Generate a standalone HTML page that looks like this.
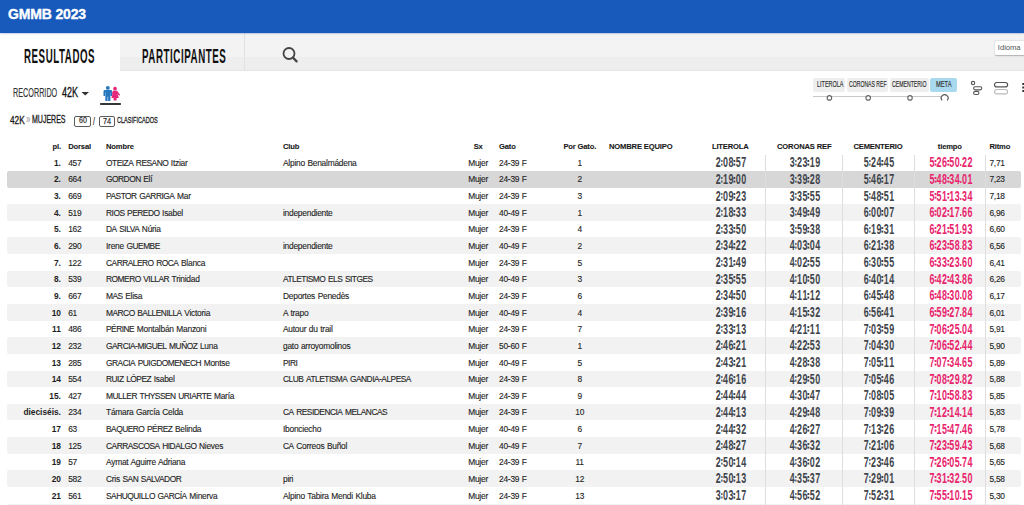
<!DOCTYPE html><html><head><meta charset="utf-8"><style>
*{margin:0;padding:0;box-sizing:border-box}
html,body{width:1024px;height:505px;overflow:hidden;background:#fff}
body{position:relative;font-family:"Liberation Sans",sans-serif;color:#222}
.a{position:absolute;white-space:nowrap}
.hdr{left:0;top:0;width:1024px;height:33px;background:#175abc;box-shadow:0 0.6px 1.6px rgba(20,70,170,.45);z-index:2}
.brand{z-index:3}
.brand{left:8px;top:5px;font-size:14px;line-height:18px;font-weight:bold;color:#fff;letter-spacing:-0.15px;-webkit-text-stroke:0.35px #fff}
.tabs{left:0;top:33px;width:1024px;height:38px;background:linear-gradient(#f3f3f3 0,#f3f3f3 24px,#eeeeee 24px,#eeeeee 37px,#e4e4e4 37px)}
.tab1{left:0;top:33px;width:120px;height:38px;background:#fff}
.sep1{left:244px;top:33px;width:1px;height:37px;background:#e2e2e2}
.cond{font-weight:bold;transform-origin:0 0;display:inline-block}
.idioma{left:995px;top:41.2px;width:31px;height:14px;background:#fff;border-radius:1.5px;box-shadow:0 0.5px 1.5px rgba(0,0,0,.3);font-size:7.6px;line-height:14.6px;color:#555;padding-left:2.8px;letter-spacing:0px}
.row{left:7px;width:1014px;height:16.64px}
.r2{background:#d7d7d7;border-radius:2px}
.rl{background:#f2f2f2;border-radius:2px}
.t{font-size:8.4px;line-height:16.64px;padding-top:0.6px;color:#1e1e1e;letter-spacing:-0.3px;word-spacing:0.5px;-webkit-text-stroke:0.12px #1e1e1e}
.t.b{letter-spacing:-0.02px;-webkit-text-stroke:0}
.t{letter-spacing:-0.24px}
.t u{text-decoration:none;letter-spacing:-0.5px}
.b{font-weight:bold}
.th{font-size:7.6px;line-height:12px;font-weight:bold;color:#1a1a1a;letter-spacing:-0.15px;-webkit-text-stroke:0.1px #1a1a1a}
.vs{top:154.5px;width:1px;height:351px;background:#dedede}
.tm{font-size:14.7px;line-height:16.64px;padding-top:0px;font-weight:bold;color:#40444b;transform:scaleX(0.608);transform-origin:50% 0;text-align:center;width:200px}
.tm i{font-style:normal;display:inline-block;width:9.13px;text-align:center}
.tm i.c,.tm i.p{position:relative;height:1px;color:inherit}
.tm i.c{width:2.63px}
.tm i.p{width:2.8px}
.tm i.c::before{content:"";position:absolute;left:-0.1px;top:-6.3px;width:2.7px;height:2.0px;background:currentColor;box-shadow:0 3.6px 0 currentColor}
.tm i.p::before{content:"";position:absolute;left:0.2px;top:-1.9px;width:2.4px;height:1.9px;background:currentColor}
.pk{color:#e8246c}
</style></head><body>
<div class="a hdr"></div><div class="a brand">GMMB 2023</div>
<div class="a tabs"></div><div class="a tab1"></div><div class="a sep1"></div>
<div class="a" style="left:23.62px;top:39.51px;font-size:20.99px;line-height:31.48px;font-weight:bold;color:#111;transform:scaleX(0.4635);transform-origin:0 0;;letter-spacing:1.2px">RESULTADOS</div>
<div class="a" style="left:141.92px;top:39.51px;font-size:20.99px;line-height:31.48px;font-weight:bold;color:#111;transform:scaleX(0.4649);transform-origin:0 0;;letter-spacing:1.2px">PARTICIPANTES</div>
<svg class="a" style="left:281px;top:44.6px" width="20" height="20" viewBox="0 0 20 20"><circle cx="8" cy="8.5" r="5.5" fill="none" stroke="#444" stroke-width="1.8"/><line x1="12.1" y1="12.7" x2="15.6" y2="16.4" stroke="#444" stroke-width="2.3" stroke-linecap="round"/></svg>
<div class="a idioma">Idioma</div>
<div class="a" style="left:13.42px;top:83.39px;font-size:13.52px;line-height:20.28px;font-weight:normal;color:#333;transform:scaleX(0.5355);transform-origin:0 0;-webkit-text-stroke:0.15px #333">RECORRIDO</div>
<div class="a" style="left:61.72px;top:83.31px;font-size:13.71px;line-height:20.57px;font-weight:normal;color:#111;transform:scaleX(0.6579);transform-origin:0 0;-webkit-text-stroke:0.3px #111">42K</div>
<svg class="a" style="left:81px;top:91px" width="9" height="6" viewBox="0 0 9 6"><path d="M0.5 1 H8 L4.25 4.6 Z" fill="#333"/></svg>
<svg class="a" style="left:96px;top:82px" width="30" height="24" viewBox="0 0 30 24">
<circle cx="11.8" cy="5.9" r="1.95" fill="#2878c0"/>
<path d="M8.7 8.1 H14.9 Q16.1 8.1 16.1 9.3 V13.9 H14.6 V10.6 H14.4 V18.9 H12.1 V14.8 H11.6 V18.9 H9.3 V10.6 H9.0 V13.9 H7.5 V9.3 Q7.5 8.1 8.7 8.1 Z" fill="#2878c0"/>
<circle cx="19" cy="6.7" r="1.85" fill="#e4287a"/>
<path d="M17.3 8.8 H20.7 Q21.3 8.8 21.7 9.5 L24.2 13.1 L23.1 13.8 L21.4 11.6 L22.9 16.1 H20.6 V18.5 H17.6 V16.1 H15.4 L16.6 11.6 L15.6 13 L16.6 9.5 Q16.9 8.8 17.3 8.8 Z" fill="#e4287a"/>
</svg>
<div class="a" style="left:100.2px;top:103.1px;width:20.8px;height:1.5px;background:#363636;border-radius:0.7px"></div>
<div class="a" style="left:10.14px;top:110.71px;font-size:11.71px;line-height:17.57px;font-weight:normal;color:#1a1a1a;transform:scaleX(0.7016);transform-origin:0 0;-webkit-text-stroke:0.35px #1a1a1a">42K</div>
<div class="a" style="left:26.2px;top:110.8px;font-size:13px;line-height:16px;color:#999;transform:scaleX(0.62);transform-origin:0 0">»</div>
<div class="a" style="left:32.24px;top:110.78px;font-size:11.55px;line-height:17.32px;font-weight:normal;color:#1a1a1a;transform:scaleX(0.6070);transform-origin:0 0;-webkit-text-stroke:0.35px #1a1a1a">MUJERES</div>
<div class="a" style="left:74.2px;top:115.7px;width:16.8px;height:11.1px;border:1px solid #5a5a5a;border-radius:2px"></div>
<div class="a" style="left:78.85px;top:113.88px;font-size:9.30px;line-height:13.94px;font-weight:normal;color:#333;transform:scaleX(0.7594);transform-origin:0 0;-webkit-text-stroke:0.25px #333">60</div>
<div class="a" style="left:92.8px;top:113.6px;font-size:11px;line-height:14px;color:#222;transform:scaleX(0.62);transform-origin:0 0;-webkit-text-stroke:0.2px #222">/</div>
<div class="a" style="left:98.7px;top:115.7px;width:16.3px;height:11.1px;border:1px solid #5a5a5a;border-radius:2px"></div>
<div class="a" style="left:102.74px;top:113.62px;font-size:9.71px;line-height:14.56px;font-weight:normal;color:#333;transform:scaleX(0.7502);transform-origin:0 0;-webkit-text-stroke:0.25px #333">74</div>
<div class="a" style="left:116.62px;top:113.64px;font-size:9.15px;line-height:13.73px;font-weight:normal;color:#222;transform:scaleX(0.6095);transform-origin:0 0;-webkit-text-stroke:0.3px #222">CLASIFICADOS</div>
<div class="a" style="left:813.0px;top:77.5px;width:32.0px;height:14.1px;background:#eeeeee;border-radius:2px"></div>
<div class="a" style="left:816.56px;top:76.76px;font-size:9.86px;line-height:14.79px;font-weight:normal;color:#333;transform:scaleX(0.5552);transform-origin:0 0;-webkit-text-stroke:0.2px #333">LITEROLA</div>
<div class="a" style="left:846.8px;top:77.5px;width:41.2px;height:14.1px;background:#eeeeee;border-radius:2px"></div>
<div class="a" style="left:848.74px;top:76.76px;font-size:9.86px;line-height:14.79px;font-weight:normal;color:#333;transform:scaleX(0.5212);transform-origin:0 0;-webkit-text-stroke:0.2px #333">CORONAS REF</div>
<div class="a" style="left:890.1px;top:77.5px;width:38.7px;height:14.1px;background:#eeeeee;border-radius:2px"></div>
<div class="a" style="left:892.14px;top:76.76px;font-size:9.86px;line-height:14.79px;font-weight:normal;color:#333;transform:scaleX(0.5249);transform-origin:0 0;-webkit-text-stroke:0.2px #333">CEMENTERIO</div>
<div class="a" style="left:930.2px;top:77.5px;width:27.1px;height:14.1px;background:#a9d9ef;border-radius:2px"></div>
<div class="a" style="left:935.74px;top:76.81px;font-size:9.86px;line-height:14.78px;font-weight:normal;color:#333;transform:scaleX(0.5809);transform-origin:0 0;-webkit-text-stroke:0.2px #333">META</div>
<div class="a" style="left:813px;top:96.0px;width:128px;height:1px;background:#c8c8c8"></div>
<svg class="a" style="left:810px;top:90px" width="150" height="14" viewBox="810 90 150 14"><circle cx="829.4" cy="97.9" r="2.25" fill="#fff" stroke="#666" stroke-width="1.1"/><circle cx="868.2" cy="97.9" r="2.25" fill="#fff" stroke="#666" stroke-width="1.1"/><circle cx="910.0" cy="97.9" r="2.25" fill="#fff" stroke="#666" stroke-width="1.1"/><path d="M942.12 100.42 A3.4 3.4 0 1 1 947.18 100.42" fill="none" stroke="#555" stroke-width="1.15"/></svg>
<svg class="a" style="left:968px;top:78px" width="56" height="20" viewBox="0 0 56 20">
<circle cx="5" cy="5.1" r="1.7" fill="none" stroke="#555" stroke-width="1.1"/>
<rect x="5.6" y="8.8" width="8.2" height="3.1" rx="1.55" fill="none" stroke="#555" stroke-width="1.1"/>
<rect x="5.6" y="13.4" width="5.3" height="3.1" rx="1.55" fill="none" stroke="#555" stroke-width="1.1"/>
<rect x="26.5" y="4.5" width="13.1" height="4.4" rx="2.2" fill="none" stroke="#555" stroke-width="1.2"/>
<rect x="26.5" y="11.5" width="13.1" height="4.4" rx="2.2" fill="none" stroke="#bbb" stroke-width="1.1"/>
<rect x="54.3" y="5" width="2" height="2" fill="#333"/>
<rect x="54.3" y="8.5" width="2" height="2" fill="#333"/>
<rect x="54.3" y="12" width="2" height="2" fill="#333"/>
</svg>
<div class="a row r2" style="top:170.90px"></div>
<div class="a row rl" style="top:204.18px"></div>
<div class="a row rl" style="top:237.46px"></div>
<div class="a row rl" style="top:270.74px"></div>
<div class="a row rl" style="top:304.02px"></div>
<div class="a row rl" style="top:337.30px"></div>
<div class="a row rl" style="top:370.58px"></div>
<div class="a row rl" style="top:403.86px"></div>
<div class="a row rl" style="top:437.14px"></div>
<div class="a row rl" style="top:470.42px"></div>
<div class="a row rl" style="top:503.70px"></div>
<div class="a vs" style="left:764.8px"></div>
<div class="a vs" style="left:842.0px"></div>
<div class="a vs" style="left:913.6px"></div>
<div class="a vs" style="left:984.7px"></div>
<div class="a th" style="left:-39.1px;top:140.5px;width:100px;text-align:right">pl.</div>
<div class="a th" style="left:68.2px;top:140.5px">Dorsal</div>
<div class="a th" style="left:106px;top:140.5px">Nombre</div>
<div class="a th" style="left:283px;top:140.5px">Club</div>
<div class="a th" style="left:428.2px;top:140.5px;width:100px;text-align:center">Sx</div>
<div class="a th" style="left:499px;top:140.5px">Gato</div>
<div class="a th" style="left:529.8px;top:140.5px;width:100px;text-align:center">Por Gato.</div>
<div class="a th" style="left:609px;top:140.5px">NOMBRE EQUIPO</div>
<div class="a th" style="left:680.3px;top:140.5px;width:100px;text-align:center">LITEROLA</div>
<div class="a th" style="left:754.2px;top:140.5px;width:100px;text-align:center">CORONAS REF</div>
<div class="a th" style="left:828px;top:140.5px;width:100px;text-align:center">CEMENTERIO</div>
<div class="a th" style="left:899.8px;top:140.5px;width:100px;text-align:center">tiempo</div>
<div class="a th" style="left:989.4px;top:140.5px">Ritmo</div>
<div class="a t b" style="left:-39.1px;top:154.26px;width:100px;text-align:right">1.</div>
<div class="a t" style="left:68.2px;top:154.26px">457</div>
<div class="a t" style="left:106px;top:154.26px"><u>OTEIZA</u> <u>RESANO</u> Itziar</div>
<div class="a t" style="left:283px;top:154.26px">Alpino Benalmádena</div>
<div class="a t" style="left:428.1px;top:154.26px;width:100px;text-align:center">Mujer</div>
<div class="a t" style="left:499px;top:154.26px">24-39 F</div>
<div class="a t" style="left:529.7px;top:154.26px;width:100px;text-align:center">1</div>
<div class="a tm" style="left:630.80px;top:154.26px"><i>2</i><i class="c"></i><i>0</i><i>8</i><i class="c"></i><i>5</i><i>7</i></div>
<div class="a tm" style="left:704.70px;top:154.26px"><i>3</i><i class="c"></i><i>2</i><i>3</i><i class="c"></i><i>1</i><i>9</i></div>
<div class="a tm" style="left:778.60px;top:154.26px"><i>5</i><i class="c"></i><i>2</i><i>4</i><i class="c"></i><i>4</i><i>5</i></div>
<div class="a tm pk" style="left:850.90px;top:154.26px"><i>5</i><i class="c"></i><i>2</i><i>6</i><i class="c"></i><i>5</i><i>0</i><i class="p"></i><i>2</i><i>2</i></div>
<div class="a t" style="left:989.4px;top:154.26px">7,71</div>
<div class="a t b" style="left:-39.1px;top:170.90px;width:100px;text-align:right">2.</div>
<div class="a t" style="left:68.2px;top:170.90px">664</div>
<div class="a t" style="left:106px;top:170.90px"><u>GORDON</u> Elí</div>
<div class="a t" style="left:428.1px;top:170.90px;width:100px;text-align:center">Mujer</div>
<div class="a t" style="left:499px;top:170.90px">24-39 F</div>
<div class="a t" style="left:529.7px;top:170.90px;width:100px;text-align:center">2</div>
<div class="a tm" style="left:630.80px;top:170.90px"><i>2</i><i class="c"></i><i>1</i><i>9</i><i class="c"></i><i>0</i><i>0</i></div>
<div class="a tm" style="left:704.70px;top:170.90px"><i>3</i><i class="c"></i><i>3</i><i>9</i><i class="c"></i><i>2</i><i>8</i></div>
<div class="a tm" style="left:778.60px;top:170.90px"><i>5</i><i class="c"></i><i>4</i><i>6</i><i class="c"></i><i>1</i><i>7</i></div>
<div class="a tm pk" style="left:850.90px;top:170.90px"><i>5</i><i class="c"></i><i>4</i><i>8</i><i class="c"></i><i>3</i><i>4</i><i class="p"></i><i>0</i><i>1</i></div>
<div class="a t" style="left:989.4px;top:170.90px">7,23</div>
<div class="a t b" style="left:-39.1px;top:187.54px;width:100px;text-align:right">3.</div>
<div class="a t" style="left:68.2px;top:187.54px">669</div>
<div class="a t" style="left:106px;top:187.54px"><u>PASTOR</u> <u>GARRIGA</u> Mar</div>
<div class="a t" style="left:428.1px;top:187.54px;width:100px;text-align:center">Mujer</div>
<div class="a t" style="left:499px;top:187.54px">24-39 F</div>
<div class="a t" style="left:529.7px;top:187.54px;width:100px;text-align:center">3</div>
<div class="a tm" style="left:630.80px;top:187.54px"><i>2</i><i class="c"></i><i>0</i><i>9</i><i class="c"></i><i>2</i><i>3</i></div>
<div class="a tm" style="left:704.70px;top:187.54px"><i>3</i><i class="c"></i><i>3</i><i>5</i><i class="c"></i><i>5</i><i>5</i></div>
<div class="a tm" style="left:778.60px;top:187.54px"><i>5</i><i class="c"></i><i>4</i><i>8</i><i class="c"></i><i>5</i><i>1</i></div>
<div class="a tm pk" style="left:850.90px;top:187.54px"><i>5</i><i class="c"></i><i>5</i><i>1</i><i class="c"></i><i>1</i><i>3</i><i class="p"></i><i>3</i><i>4</i></div>
<div class="a t" style="left:989.4px;top:187.54px">7,18</div>
<div class="a t b" style="left:-39.1px;top:204.18px;width:100px;text-align:right">4.</div>
<div class="a t" style="left:68.2px;top:204.18px">519</div>
<div class="a t" style="left:106px;top:204.18px"><u>RIOS</u> <u>PEREDO</u> Isabel</div>
<div class="a t" style="left:283px;top:204.18px">independiente</div>
<div class="a t" style="left:428.1px;top:204.18px;width:100px;text-align:center">Mujer</div>
<div class="a t" style="left:499px;top:204.18px">40-49 F</div>
<div class="a t" style="left:529.7px;top:204.18px;width:100px;text-align:center">1</div>
<div class="a tm" style="left:630.80px;top:204.18px"><i>2</i><i class="c"></i><i>1</i><i>8</i><i class="c"></i><i>3</i><i>3</i></div>
<div class="a tm" style="left:704.70px;top:204.18px"><i>3</i><i class="c"></i><i>4</i><i>9</i><i class="c"></i><i>4</i><i>9</i></div>
<div class="a tm" style="left:778.60px;top:204.18px"><i>6</i><i class="c"></i><i>0</i><i>0</i><i class="c"></i><i>0</i><i>7</i></div>
<div class="a tm pk" style="left:850.90px;top:204.18px"><i>6</i><i class="c"></i><i>0</i><i>2</i><i class="c"></i><i>1</i><i>7</i><i class="p"></i><i>6</i><i>6</i></div>
<div class="a t" style="left:989.4px;top:204.18px">6,96</div>
<div class="a t b" style="left:-39.1px;top:220.82px;width:100px;text-align:right">5.</div>
<div class="a t" style="left:68.2px;top:220.82px">162</div>
<div class="a t" style="left:106px;top:220.82px"><u>DA</u> <u>SILVA</u> Núria</div>
<div class="a t" style="left:428.1px;top:220.82px;width:100px;text-align:center">Mujer</div>
<div class="a t" style="left:499px;top:220.82px">24-39 F</div>
<div class="a t" style="left:529.7px;top:220.82px;width:100px;text-align:center">4</div>
<div class="a tm" style="left:630.80px;top:220.82px"><i>2</i><i class="c"></i><i>3</i><i>3</i><i class="c"></i><i>5</i><i>0</i></div>
<div class="a tm" style="left:704.70px;top:220.82px"><i>3</i><i class="c"></i><i>5</i><i>9</i><i class="c"></i><i>3</i><i>8</i></div>
<div class="a tm" style="left:778.60px;top:220.82px"><i>6</i><i class="c"></i><i>1</i><i>9</i><i class="c"></i><i>3</i><i>1</i></div>
<div class="a tm pk" style="left:850.90px;top:220.82px"><i>6</i><i class="c"></i><i>2</i><i>1</i><i class="c"></i><i>5</i><i>1</i><i class="p"></i><i>9</i><i>3</i></div>
<div class="a t" style="left:989.4px;top:220.82px">6,60</div>
<div class="a t b" style="left:-39.1px;top:237.46px;width:100px;text-align:right">6.</div>
<div class="a t" style="left:68.2px;top:237.46px">290</div>
<div class="a t" style="left:106px;top:237.46px">Irene <u>GUEMBE</u></div>
<div class="a t" style="left:283px;top:237.46px">independiente</div>
<div class="a t" style="left:428.1px;top:237.46px;width:100px;text-align:center">Mujer</div>
<div class="a t" style="left:499px;top:237.46px">40-49 F</div>
<div class="a t" style="left:529.7px;top:237.46px;width:100px;text-align:center">2</div>
<div class="a tm" style="left:630.80px;top:237.46px"><i>2</i><i class="c"></i><i>3</i><i>4</i><i class="c"></i><i>2</i><i>2</i></div>
<div class="a tm" style="left:704.70px;top:237.46px"><i>4</i><i class="c"></i><i>0</i><i>3</i><i class="c"></i><i>0</i><i>4</i></div>
<div class="a tm" style="left:778.60px;top:237.46px"><i>6</i><i class="c"></i><i>2</i><i>1</i><i class="c"></i><i>3</i><i>8</i></div>
<div class="a tm pk" style="left:850.90px;top:237.46px"><i>6</i><i class="c"></i><i>2</i><i>3</i><i class="c"></i><i>5</i><i>8</i><i class="p"></i><i>8</i><i>3</i></div>
<div class="a t" style="left:989.4px;top:237.46px">6,56</div>
<div class="a t b" style="left:-39.1px;top:254.10px;width:100px;text-align:right">7.</div>
<div class="a t" style="left:68.2px;top:254.10px">122</div>
<div class="a t" style="left:106px;top:254.10px"><u>CARRALERO</u> <u>ROCA</u> Blanca</div>
<div class="a t" style="left:428.1px;top:254.10px;width:100px;text-align:center">Mujer</div>
<div class="a t" style="left:499px;top:254.10px">24-39 F</div>
<div class="a t" style="left:529.7px;top:254.10px;width:100px;text-align:center">5</div>
<div class="a tm" style="left:630.80px;top:254.10px"><i>2</i><i class="c"></i><i>3</i><i>1</i><i class="c"></i><i>4</i><i>9</i></div>
<div class="a tm" style="left:704.70px;top:254.10px"><i>4</i><i class="c"></i><i>0</i><i>2</i><i class="c"></i><i>5</i><i>5</i></div>
<div class="a tm" style="left:778.60px;top:254.10px"><i>6</i><i class="c"></i><i>3</i><i>0</i><i class="c"></i><i>5</i><i>5</i></div>
<div class="a tm pk" style="left:850.90px;top:254.10px"><i>6</i><i class="c"></i><i>3</i><i>3</i><i class="c"></i><i>2</i><i>3</i><i class="p"></i><i>6</i><i>0</i></div>
<div class="a t" style="left:989.4px;top:254.10px">6,41</div>
<div class="a t b" style="left:-39.1px;top:270.74px;width:100px;text-align:right">8.</div>
<div class="a t" style="left:68.2px;top:270.74px">539</div>
<div class="a t" style="left:106px;top:270.74px"><u>ROMERO</u> <u>VILLAR</u> Trinidad</div>
<div class="a t" style="left:283px;top:270.74px"><u>ATLETISMO</u> <u>ELS</u> <u>SITGES</u></div>
<div class="a t" style="left:428.1px;top:270.74px;width:100px;text-align:center">Mujer</div>
<div class="a t" style="left:499px;top:270.74px">40-49 F</div>
<div class="a t" style="left:529.7px;top:270.74px;width:100px;text-align:center">3</div>
<div class="a tm" style="left:630.80px;top:270.74px"><i>2</i><i class="c"></i><i>3</i><i>5</i><i class="c"></i><i>5</i><i>5</i></div>
<div class="a tm" style="left:704.70px;top:270.74px"><i>4</i><i class="c"></i><i>1</i><i>0</i><i class="c"></i><i>5</i><i>0</i></div>
<div class="a tm" style="left:778.60px;top:270.74px"><i>6</i><i class="c"></i><i>4</i><i>0</i><i class="c"></i><i>1</i><i>4</i></div>
<div class="a tm pk" style="left:850.90px;top:270.74px"><i>6</i><i class="c"></i><i>4</i><i>2</i><i class="c"></i><i>4</i><i>3</i><i class="p"></i><i>8</i><i>6</i></div>
<div class="a t" style="left:989.4px;top:270.74px">6,26</div>
<div class="a t b" style="left:-39.1px;top:287.38px;width:100px;text-align:right">9.</div>
<div class="a t" style="left:68.2px;top:287.38px">667</div>
<div class="a t" style="left:106px;top:287.38px"><u>MAS</u> Elisa</div>
<div class="a t" style="left:283px;top:287.38px">Deportes Penedès</div>
<div class="a t" style="left:428.1px;top:287.38px;width:100px;text-align:center">Mujer</div>
<div class="a t" style="left:499px;top:287.38px">24-39 F</div>
<div class="a t" style="left:529.7px;top:287.38px;width:100px;text-align:center">6</div>
<div class="a tm" style="left:630.80px;top:287.38px"><i>2</i><i class="c"></i><i>3</i><i>4</i><i class="c"></i><i>5</i><i>0</i></div>
<div class="a tm" style="left:704.70px;top:287.38px"><i>4</i><i class="c"></i><i>1</i><i>1</i><i class="c"></i><i>1</i><i>2</i></div>
<div class="a tm" style="left:778.60px;top:287.38px"><i>6</i><i class="c"></i><i>4</i><i>5</i><i class="c"></i><i>4</i><i>8</i></div>
<div class="a tm pk" style="left:850.90px;top:287.38px"><i>6</i><i class="c"></i><i>4</i><i>8</i><i class="c"></i><i>3</i><i>0</i><i class="p"></i><i>0</i><i>8</i></div>
<div class="a t" style="left:989.4px;top:287.38px">6,17</div>
<div class="a t b" style="left:-39.1px;top:304.02px;width:100px;text-align:right">10</div>
<div class="a t" style="left:68.2px;top:304.02px">61</div>
<div class="a t" style="left:106px;top:304.02px"><u>MARCO</u> <u>BALLENILLA</u> Victoria</div>
<div class="a t" style="left:283px;top:304.02px">A trapo</div>
<div class="a t" style="left:428.1px;top:304.02px;width:100px;text-align:center">Mujer</div>
<div class="a t" style="left:499px;top:304.02px">40-49 F</div>
<div class="a t" style="left:529.7px;top:304.02px;width:100px;text-align:center">4</div>
<div class="a tm" style="left:630.80px;top:304.02px"><i>2</i><i class="c"></i><i>3</i><i>9</i><i class="c"></i><i>1</i><i>6</i></div>
<div class="a tm" style="left:704.70px;top:304.02px"><i>4</i><i class="c"></i><i>1</i><i>5</i><i class="c"></i><i>3</i><i>2</i></div>
<div class="a tm" style="left:778.60px;top:304.02px"><i>6</i><i class="c"></i><i>5</i><i>6</i><i class="c"></i><i>4</i><i>1</i></div>
<div class="a tm pk" style="left:850.90px;top:304.02px"><i>6</i><i class="c"></i><i>5</i><i>9</i><i class="c"></i><i>2</i><i>7</i><i class="p"></i><i>8</i><i>4</i></div>
<div class="a t" style="left:989.4px;top:304.02px">6,01</div>
<div class="a t b" style="left:-39.1px;top:320.66px;width:100px;text-align:right">11</div>
<div class="a t" style="left:68.2px;top:320.66px">486</div>
<div class="a t" style="left:106px;top:320.66px"><u>PÉRINE</u> Montalbán Manzoni</div>
<div class="a t" style="left:283px;top:320.66px">Autour du trail</div>
<div class="a t" style="left:428.1px;top:320.66px;width:100px;text-align:center">Mujer</div>
<div class="a t" style="left:499px;top:320.66px">24-39 F</div>
<div class="a t" style="left:529.7px;top:320.66px;width:100px;text-align:center">7</div>
<div class="a tm" style="left:630.80px;top:320.66px"><i>2</i><i class="c"></i><i>3</i><i>3</i><i class="c"></i><i>1</i><i>3</i></div>
<div class="a tm" style="left:704.70px;top:320.66px"><i>4</i><i class="c"></i><i>2</i><i>1</i><i class="c"></i><i>1</i><i>1</i></div>
<div class="a tm" style="left:778.60px;top:320.66px"><i>7</i><i class="c"></i><i>0</i><i>3</i><i class="c"></i><i>5</i><i>9</i></div>
<div class="a tm pk" style="left:850.90px;top:320.66px"><i>7</i><i class="c"></i><i>0</i><i>6</i><i class="c"></i><i>2</i><i>5</i><i class="p"></i><i>0</i><i>4</i></div>
<div class="a t" style="left:989.4px;top:320.66px">5,91</div>
<div class="a t b" style="left:-39.1px;top:337.30px;width:100px;text-align:right">12</div>
<div class="a t" style="left:68.2px;top:337.30px">232</div>
<div class="a t" style="left:106px;top:337.30px"><u>GARCIA-MIGUEL</u> <u>MUÑOZ</u> Luna</div>
<div class="a t" style="left:283px;top:337.30px">gato arroyomolinos</div>
<div class="a t" style="left:428.1px;top:337.30px;width:100px;text-align:center">Mujer</div>
<div class="a t" style="left:499px;top:337.30px">50-60 F</div>
<div class="a t" style="left:529.7px;top:337.30px;width:100px;text-align:center">1</div>
<div class="a tm" style="left:630.80px;top:337.30px"><i>2</i><i class="c"></i><i>4</i><i>6</i><i class="c"></i><i>2</i><i>1</i></div>
<div class="a tm" style="left:704.70px;top:337.30px"><i>4</i><i class="c"></i><i>2</i><i>2</i><i class="c"></i><i>5</i><i>3</i></div>
<div class="a tm" style="left:778.60px;top:337.30px"><i>7</i><i class="c"></i><i>0</i><i>4</i><i class="c"></i><i>3</i><i>0</i></div>
<div class="a tm pk" style="left:850.90px;top:337.30px"><i>7</i><i class="c"></i><i>0</i><i>6</i><i class="c"></i><i>5</i><i>2</i><i class="p"></i><i>4</i><i>4</i></div>
<div class="a t" style="left:989.4px;top:337.30px">5,90</div>
<div class="a t b" style="left:-39.1px;top:353.94px;width:100px;text-align:right">13</div>
<div class="a t" style="left:68.2px;top:353.94px">285</div>
<div class="a t" style="left:106px;top:353.94px"><u>GRACIA</u> <u>PUIGDOMENECH</u> Montse</div>
<div class="a t" style="left:283px;top:353.94px"><u>PIRI</u></div>
<div class="a t" style="left:428.1px;top:353.94px;width:100px;text-align:center">Mujer</div>
<div class="a t" style="left:499px;top:353.94px">40-49 F</div>
<div class="a t" style="left:529.7px;top:353.94px;width:100px;text-align:center">5</div>
<div class="a tm" style="left:630.80px;top:353.94px"><i>2</i><i class="c"></i><i>4</i><i>3</i><i class="c"></i><i>2</i><i>1</i></div>
<div class="a tm" style="left:704.70px;top:353.94px"><i>4</i><i class="c"></i><i>2</i><i>8</i><i class="c"></i><i>3</i><i>8</i></div>
<div class="a tm" style="left:778.60px;top:353.94px"><i>7</i><i class="c"></i><i>0</i><i>5</i><i class="c"></i><i>1</i><i>1</i></div>
<div class="a tm pk" style="left:850.90px;top:353.94px"><i>7</i><i class="c"></i><i>0</i><i>7</i><i class="c"></i><i>3</i><i>4</i><i class="p"></i><i>6</i><i>5</i></div>
<div class="a t" style="left:989.4px;top:353.94px">5,89</div>
<div class="a t b" style="left:-39.1px;top:370.58px;width:100px;text-align:right">14</div>
<div class="a t" style="left:68.2px;top:370.58px">554</div>
<div class="a t" style="left:106px;top:370.58px"><u>RUIZ</u> <u>LÓPEZ</u> Isabel</div>
<div class="a t" style="left:283px;top:370.58px"><u>CLUB</u> <u>ATLETISMA</u> <u>GANDIA-ALPESA</u></div>
<div class="a t" style="left:428.1px;top:370.58px;width:100px;text-align:center">Mujer</div>
<div class="a t" style="left:499px;top:370.58px">24-39 F</div>
<div class="a t" style="left:529.7px;top:370.58px;width:100px;text-align:center">8</div>
<div class="a tm" style="left:630.80px;top:370.58px"><i>2</i><i class="c"></i><i>4</i><i>6</i><i class="c"></i><i>1</i><i>6</i></div>
<div class="a tm" style="left:704.70px;top:370.58px"><i>4</i><i class="c"></i><i>2</i><i>9</i><i class="c"></i><i>5</i><i>0</i></div>
<div class="a tm" style="left:778.60px;top:370.58px"><i>7</i><i class="c"></i><i>0</i><i>5</i><i class="c"></i><i>4</i><i>6</i></div>
<div class="a tm pk" style="left:850.90px;top:370.58px"><i>7</i><i class="c"></i><i>0</i><i>8</i><i class="c"></i><i>2</i><i>9</i><i class="p"></i><i>8</i><i>2</i></div>
<div class="a t" style="left:989.4px;top:370.58px">5,88</div>
<div class="a t b" style="left:-39.1px;top:387.22px;width:100px;text-align:right">15.</div>
<div class="a t" style="left:68.2px;top:387.22px">427</div>
<div class="a t" style="left:106px;top:387.22px"><u>MULLER</u> <u>THYSSEN</u> <u>URIARTE</u> María</div>
<div class="a t" style="left:428.1px;top:387.22px;width:100px;text-align:center">Mujer</div>
<div class="a t" style="left:499px;top:387.22px">24-39 F</div>
<div class="a t" style="left:529.7px;top:387.22px;width:100px;text-align:center">9</div>
<div class="a tm" style="left:630.80px;top:387.22px"><i>2</i><i class="c"></i><i>4</i><i>4</i><i class="c"></i><i>4</i><i>4</i></div>
<div class="a tm" style="left:704.70px;top:387.22px"><i>4</i><i class="c"></i><i>3</i><i>0</i><i class="c"></i><i>4</i><i>7</i></div>
<div class="a tm" style="left:778.60px;top:387.22px"><i>7</i><i class="c"></i><i>0</i><i>8</i><i class="c"></i><i>0</i><i>5</i></div>
<div class="a tm pk" style="left:850.90px;top:387.22px"><i>7</i><i class="c"></i><i>1</i><i>0</i><i class="c"></i><i>5</i><i>8</i><i class="p"></i><i>8</i><i>3</i></div>
<div class="a t" style="left:989.4px;top:387.22px">5,85</div>
<div class="a t b" style="left:-39.1px;top:403.86px;width:100px;text-align:right">dieciséis.</div>
<div class="a t" style="left:68.2px;top:403.86px">234</div>
<div class="a t" style="left:106px;top:403.86px">Támara García Celda</div>
<div class="a t" style="left:283px;top:403.86px"><u>CA</u> <u>RESIDENCIA</u> <u>MELANCAS</u></div>
<div class="a t" style="left:428.1px;top:403.86px;width:100px;text-align:center">Mujer</div>
<div class="a t" style="left:499px;top:403.86px">24-39 F</div>
<div class="a t" style="left:529.7px;top:403.86px;width:100px;text-align:center">10</div>
<div class="a tm" style="left:630.80px;top:403.86px"><i>2</i><i class="c"></i><i>4</i><i>4</i><i class="c"></i><i>1</i><i>3</i></div>
<div class="a tm" style="left:704.70px;top:403.86px"><i>4</i><i class="c"></i><i>2</i><i>9</i><i class="c"></i><i>4</i><i>8</i></div>
<div class="a tm" style="left:778.60px;top:403.86px"><i>7</i><i class="c"></i><i>0</i><i>9</i><i class="c"></i><i>3</i><i>9</i></div>
<div class="a tm pk" style="left:850.90px;top:403.86px"><i>7</i><i class="c"></i><i>1</i><i>2</i><i class="c"></i><i>1</i><i>4</i><i class="p"></i><i>1</i><i>4</i></div>
<div class="a t" style="left:989.4px;top:403.86px">5,83</div>
<div class="a t b" style="left:-39.1px;top:420.50px;width:100px;text-align:right">17</div>
<div class="a t" style="left:68.2px;top:420.50px">63</div>
<div class="a t" style="left:106px;top:420.50px"><u>BAQUERO</u> <u>PÉREZ</u> Belinda</div>
<div class="a t" style="left:283px;top:420.50px">Ibonciecho</div>
<div class="a t" style="left:428.1px;top:420.50px;width:100px;text-align:center">Mujer</div>
<div class="a t" style="left:499px;top:420.50px">40-49 F</div>
<div class="a t" style="left:529.7px;top:420.50px;width:100px;text-align:center">6</div>
<div class="a tm" style="left:630.80px;top:420.50px"><i>2</i><i class="c"></i><i>4</i><i>4</i><i class="c"></i><i>3</i><i>2</i></div>
<div class="a tm" style="left:704.70px;top:420.50px"><i>4</i><i class="c"></i><i>2</i><i>6</i><i class="c"></i><i>2</i><i>7</i></div>
<div class="a tm" style="left:778.60px;top:420.50px"><i>7</i><i class="c"></i><i>1</i><i>3</i><i class="c"></i><i>2</i><i>6</i></div>
<div class="a tm pk" style="left:850.90px;top:420.50px"><i>7</i><i class="c"></i><i>1</i><i>5</i><i class="c"></i><i>4</i><i>7</i><i class="p"></i><i>4</i><i>6</i></div>
<div class="a t" style="left:989.4px;top:420.50px">5,78</div>
<div class="a t b" style="left:-39.1px;top:437.14px;width:100px;text-align:right">18</div>
<div class="a t" style="left:68.2px;top:437.14px">125</div>
<div class="a t" style="left:106px;top:437.14px"><u>CARRASCOSA</u> <u>HIDALGO</u> Nieves</div>
<div class="a t" style="left:283px;top:437.14px"><u>CA</u> Correos Buñol</div>
<div class="a t" style="left:428.1px;top:437.14px;width:100px;text-align:center">Mujer</div>
<div class="a t" style="left:499px;top:437.14px">40-49 F</div>
<div class="a t" style="left:529.7px;top:437.14px;width:100px;text-align:center">7</div>
<div class="a tm" style="left:630.80px;top:437.14px"><i>2</i><i class="c"></i><i>4</i><i>8</i><i class="c"></i><i>2</i><i>7</i></div>
<div class="a tm" style="left:704.70px;top:437.14px"><i>4</i><i class="c"></i><i>3</i><i>6</i><i class="c"></i><i>3</i><i>2</i></div>
<div class="a tm" style="left:778.60px;top:437.14px"><i>7</i><i class="c"></i><i>2</i><i>1</i><i class="c"></i><i>0</i><i>6</i></div>
<div class="a tm pk" style="left:850.90px;top:437.14px"><i>7</i><i class="c"></i><i>2</i><i>3</i><i class="c"></i><i>5</i><i>9</i><i class="p"></i><i>4</i><i>3</i></div>
<div class="a t" style="left:989.4px;top:437.14px">5,68</div>
<div class="a t b" style="left:-39.1px;top:453.78px;width:100px;text-align:right">19</div>
<div class="a t" style="left:68.2px;top:453.78px">57</div>
<div class="a t" style="left:106px;top:453.78px">Aymat Aguirre Adriana</div>
<div class="a t" style="left:428.1px;top:453.78px;width:100px;text-align:center">Mujer</div>
<div class="a t" style="left:499px;top:453.78px">24-39 F</div>
<div class="a t" style="left:529.7px;top:453.78px;width:100px;text-align:center">11</div>
<div class="a tm" style="left:630.80px;top:453.78px"><i>2</i><i class="c"></i><i>5</i><i>0</i><i class="c"></i><i>1</i><i>4</i></div>
<div class="a tm" style="left:704.70px;top:453.78px"><i>4</i><i class="c"></i><i>3</i><i>6</i><i class="c"></i><i>0</i><i>2</i></div>
<div class="a tm" style="left:778.60px;top:453.78px"><i>7</i><i class="c"></i><i>2</i><i>3</i><i class="c"></i><i>4</i><i>6</i></div>
<div class="a tm pk" style="left:850.90px;top:453.78px"><i>7</i><i class="c"></i><i>2</i><i>6</i><i class="c"></i><i>0</i><i>5</i><i class="p"></i><i>7</i><i>4</i></div>
<div class="a t" style="left:989.4px;top:453.78px">5,65</div>
<div class="a t b" style="left:-39.1px;top:470.42px;width:100px;text-align:right">20</div>
<div class="a t" style="left:68.2px;top:470.42px">582</div>
<div class="a t" style="left:106px;top:470.42px">Cris <u>SAN</u> <u>SALVADOR</u></div>
<div class="a t" style="left:283px;top:470.42px">piri</div>
<div class="a t" style="left:428.1px;top:470.42px;width:100px;text-align:center">Mujer</div>
<div class="a t" style="left:499px;top:470.42px">24-39 F</div>
<div class="a t" style="left:529.7px;top:470.42px;width:100px;text-align:center">12</div>
<div class="a tm" style="left:630.80px;top:470.42px"><i>2</i><i class="c"></i><i>5</i><i>0</i><i class="c"></i><i>1</i><i>3</i></div>
<div class="a tm" style="left:704.70px;top:470.42px"><i>4</i><i class="c"></i><i>3</i><i>5</i><i class="c"></i><i>3</i><i>7</i></div>
<div class="a tm" style="left:778.60px;top:470.42px"><i>7</i><i class="c"></i><i>2</i><i>9</i><i class="c"></i><i>0</i><i>1</i></div>
<div class="a tm pk" style="left:850.90px;top:470.42px"><i>7</i><i class="c"></i><i>3</i><i>1</i><i class="c"></i><i>3</i><i>2</i><i class="p"></i><i>5</i><i>0</i></div>
<div class="a t" style="left:989.4px;top:470.42px">5,58</div>
<div class="a t b" style="left:-39.1px;top:487.06px;width:100px;text-align:right">21</div>
<div class="a t" style="left:68.2px;top:487.06px">561</div>
<div class="a t" style="left:106px;top:487.06px"><u>SAHUQUILLO</u> <u>GARCÍA</u> Minerva</div>
<div class="a t" style="left:283px;top:487.06px">Alpino Tabira Mendi Kluba</div>
<div class="a t" style="left:428.1px;top:487.06px;width:100px;text-align:center">Mujer</div>
<div class="a t" style="left:499px;top:487.06px">24-39 F</div>
<div class="a t" style="left:529.7px;top:487.06px;width:100px;text-align:center">13</div>
<div class="a tm" style="left:630.80px;top:487.06px"><i>3</i><i class="c"></i><i>0</i><i>3</i><i class="c"></i><i>1</i><i>7</i></div>
<div class="a tm" style="left:704.70px;top:487.06px"><i>4</i><i class="c"></i><i>5</i><i>6</i><i class="c"></i><i>5</i><i>2</i></div>
<div class="a tm" style="left:778.60px;top:487.06px"><i>7</i><i class="c"></i><i>5</i><i>2</i><i class="c"></i><i>3</i><i>1</i></div>
<div class="a tm pk" style="left:850.90px;top:487.06px"><i>7</i><i class="c"></i><i>5</i><i>5</i><i class="c"></i><i>1</i><i>0</i><i class="p"></i><i>1</i><i>5</i></div>
<div class="a t" style="left:989.4px;top:487.06px">5,30</div>
</body></html>
